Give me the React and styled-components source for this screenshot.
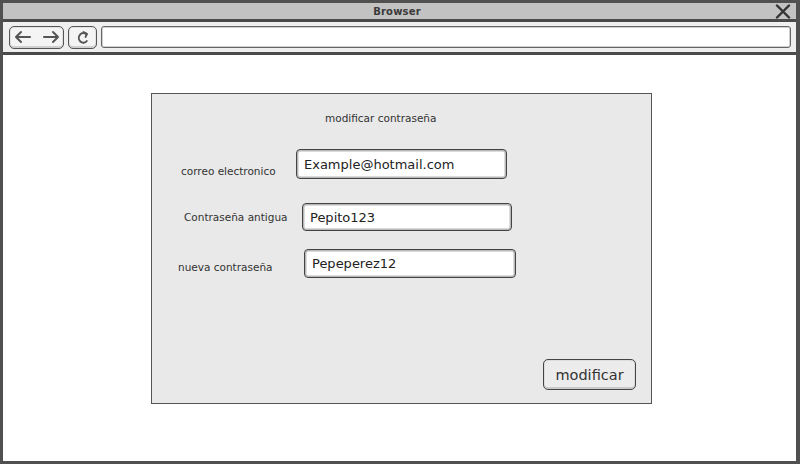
import styled, { createGlobalStyle } from 'styled-components';

const GlobalStyle = createGlobalStyle`
  html, body {
    margin: 0;
    padding: 0;
    background: #ffffff;
  }
  * {
    box-sizing: border-box;
  }
`;

const Sketch = `"DejaVu Sans", "Liberation Sans", sans-serif`;

const Window = styled.div`
  width: 800px;
  height: 464px;
  display: flex;
  flex-direction: column;
  border: 3px solid #505050;
  border-right-width: 4px;
  border-bottom-width: 3px;
  background: #ffffff;
  font-family: ${Sketch};
  color: #333;
`;

const TitleBar = styled.div`
  height: 19px;
  background: #c2c2c2;
  border-bottom: 3px solid #4a4a4a;
  display: grid;
  grid-template-columns: 1fr auto 1fr;
  align-items: center;
  padding: 0 5px 0 0;
`;

const TitleText = styled.span`
  grid-column: 2;
  font-size: 10px;
  font-weight: 600;
  color: #3a3a3a;
  letter-spacing: 0.2px;
`;

const CloseBox = styled.span`
  grid-column: 3;
  justify-self: end;
  display: flex;
  align-items: center;
`;

const Toolbar = styled.div`
  height: 33px;
  background: #efefef;
  border-bottom: 3px solid #4a4a4a;
  display: flex;
  align-items: center;
  gap: 4px;
  padding: 0 5px 0 6px;
`;

const NavButton = styled.div`
  width: ${p => p.w}px;
  height: 23px;
  border: 1.5px solid #555;
  border-radius: 5px;
  background: #f4f4f4;
  box-shadow: inset 0 -2px 0 #cfcfcf, inset 0 0 0 1px #e2e2e2;
  display: flex;
  align-items: center;
  justify-content: center;
  gap: 10px;
`;

const UrlField = styled.div`
  flex: 1;
  height: 22px;
  background: #ffffff;
  border: 1.5px solid #666;
  border-radius: 3px;
  box-shadow: inset 0 0 0 1px #d0d0d0;
`;

const Content = styled.div`
  flex: 1;
  padding: 38px 0 0 148px;
`;

const Panel = styled.div`
  width: 501px;
  height: 311px;
  background: #e9e9e9;
  border: 1.5px solid #555;
  display: flex;
  flex-direction: column;
`;

const PanelTitle = styled.div`
  margin-top: 16px;
  height: 16px;
  line-height: 16px;
  padding-left: 173px;
  font-size: 10.5px;
  color: #333;
`;

const Row = styled.div`
  display: flex;
  align-items: center;
  margin-top: ${p => p.top}px;
  padding-left: ${p => p.indent}px;
`;

const Label = styled.span`
  width: ${p => p.w}px;
  font-size: 10.5px;
  color: #333;
  position: relative;
  top: ${p => p.drop}px;
`;

const Field = styled.div`
  width: ${p => p.w}px;
  height: ${p => p.h}px;
  background: #ffffff;
  border: 1.5px solid #444;
  border-radius: 4px;
  box-shadow: inset 0 0 0 1.5px #b8b8b8;
  display: flex;
  align-items: center;
  padding-left: 7px;
  font-size: 13px;
  color: #222;
`;

const Footer = styled.div`
  margin-top: auto;
  display: flex;
  justify-content: flex-end;
  padding: 0 15px 13px 0;
`;

const Button = styled.button`
  width: 93px;
  height: 31px;
  background: #ececec;
  border: 1.5px solid #444;
  border-radius: 5px;
  box-shadow: inset 0 -2px 0 #c9c9c9, inset 0 0 0 1px #dcdcdc;
  font-family: ${Sketch};
  font-size: 14.5px;
  color: #333;
  padding: 0;
  cursor: pointer;
`;

function CloseIcon() {
  return (
    <svg width="16" height="15" viewBox="0 0 16 15">
      <path d="M2 1.5 L14 13.5 M14 1.5 L2 13.5" stroke="#333" strokeWidth="2.4" strokeLinecap="round" />
    </svg>
  );
}

function Arrow({ dir }) {
  const d = dir === 'left'
    ? 'M16 7 H2 M7 2 L2 7 L7 12'
    : 'M2 7 H16 M11 2 L16 7 L11 12';
  return (
    <svg width="18" height="14" viewBox="0 0 18 14">
      <path d={d} stroke="#555" strokeWidth="2" fill="none" strokeLinecap="round" strokeLinejoin="round" />
    </svg>
  );
}

function RefreshIcon() {
  return (
    <svg width="12" height="15" viewBox="0 0 12 15">
      <path d="M9.5 4.5 A4.5 4.8 0 1 0 9.8 11" stroke="#555" strokeWidth="2" fill="none" strokeLinecap="round" />
      <path d="M6.5 2 L10 3.8 L8.5 7" stroke="#555" strokeWidth="1.8" fill="none" strokeLinecap="round" strokeLinejoin="round" />
    </svg>
  );
}

const fields = [
  { label: 'correo electronico', value: 'Example@hotmail.com', top: 23, indent: 29, lw: 115, w: 211, h: 30, drop: 7 },
  { label: 'Contraseña antigua', value: 'Pepito123', top: 24, indent: 32, lw: 118, w: 210, h: 28, drop: 0 },
  { label: 'nueva contraseña', value: 'Pepeperez12', top: 18, indent: 26, lw: 126, w: 212, h: 29, drop: 3 },
];

export default function App() {
  return (
    <>
      <GlobalStyle />
      <Window>
        <TitleBar>
          <TitleText>Browser</TitleText>
          <CloseBox><CloseIcon /></CloseBox>
        </TitleBar>
        <Toolbar>
          <NavButton w={55}>
            <Arrow dir="left" />
            <Arrow dir="right" />
          </NavButton>
          <NavButton w={29}>
            <RefreshIcon />
          </NavButton>
          <UrlField />
        </Toolbar>
        <Content>
          <Panel>
            <PanelTitle>modificar contraseña</PanelTitle>
            {fields.map(f => (
              <Row key={f.label} top={f.top} indent={f.indent}>
                <Label w={f.lw} drop={f.drop}>{f.label}</Label>
                <Field w={f.w} h={f.h}>{f.value}</Field>
              </Row>
            ))}
            <Footer>
              <Button>modificar</Button>
            </Footer>
          </Panel>
        </Content>
      </Window>
    </>
  );
}
